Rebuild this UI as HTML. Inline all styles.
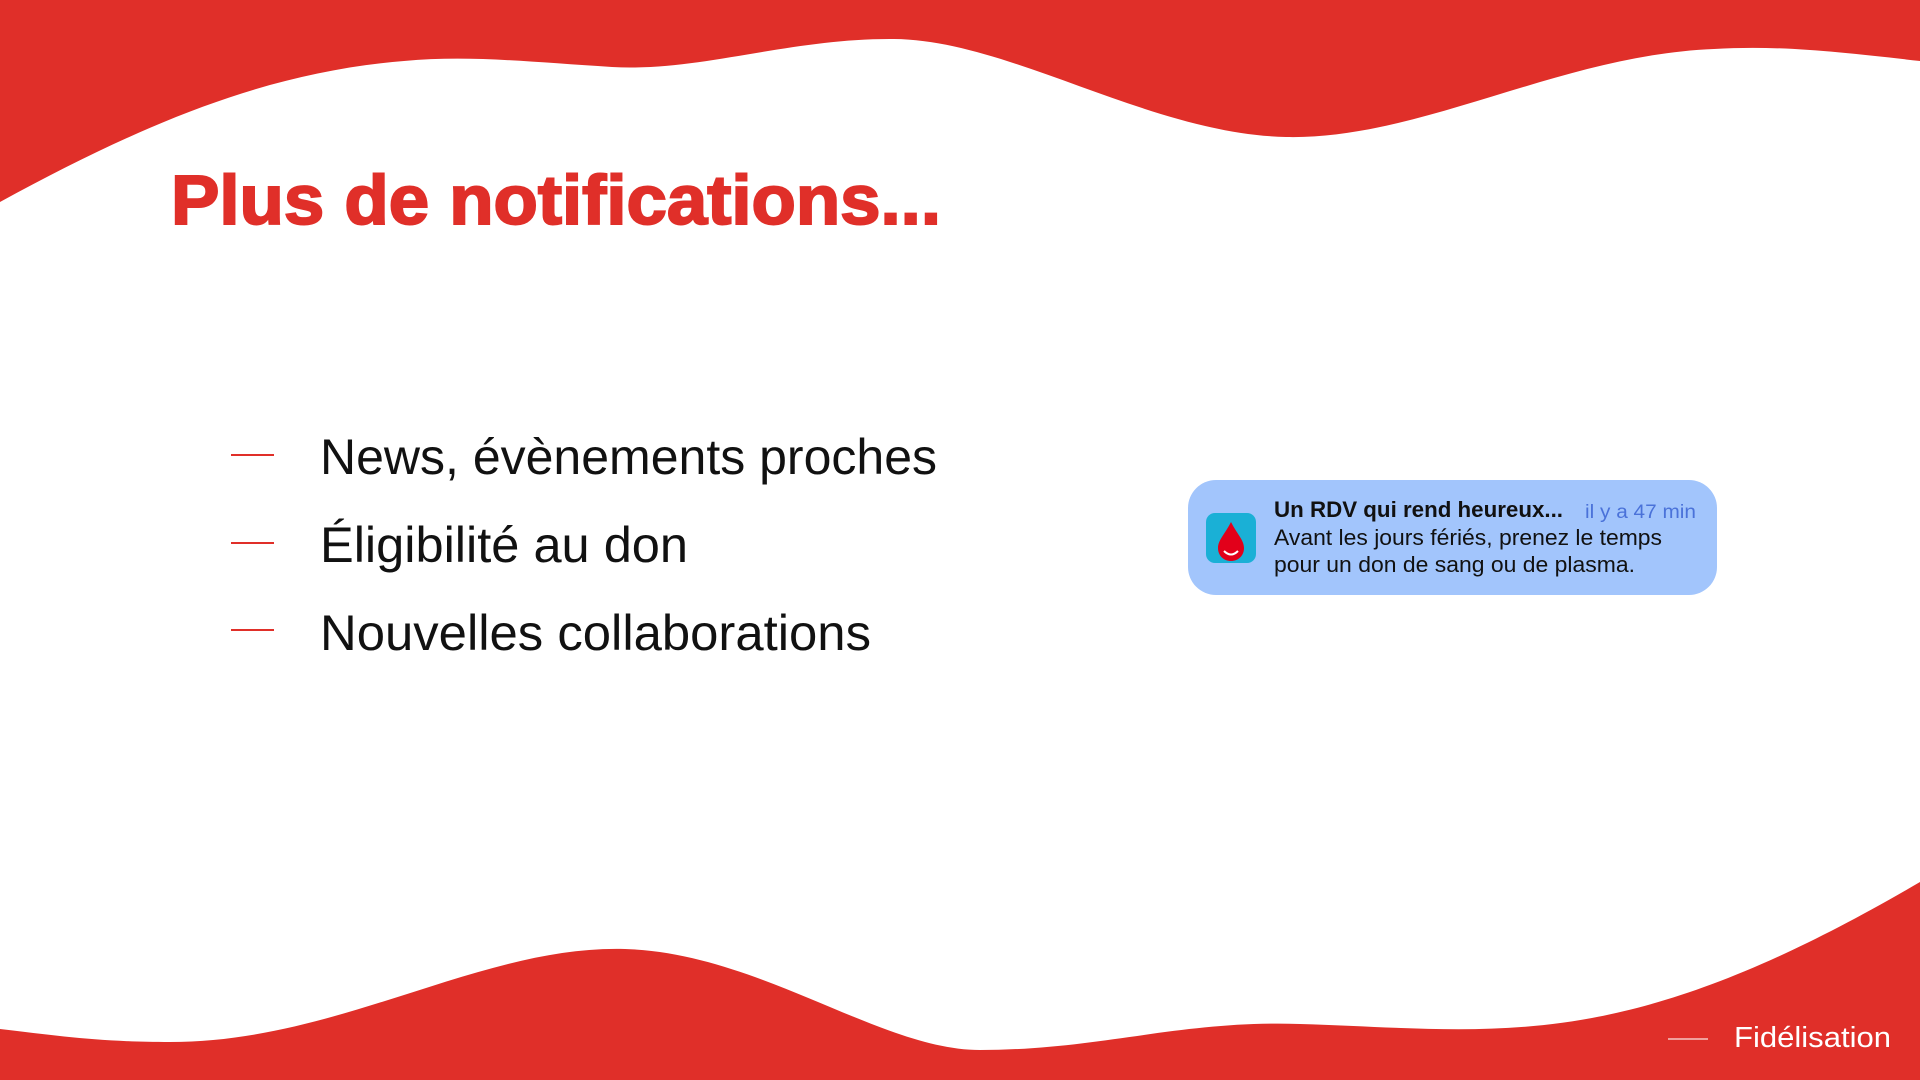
<!DOCTYPE html>
<html><head><meta charset="utf-8"><style>
html,body{margin:0;padding:0;width:1920px;height:1080px;overflow:hidden;background:#fff;font-family:"Liberation Sans",sans-serif}
</style></head><body>
<svg width="1920" height="1080" viewBox="0 0 1920 1080" xmlns="http://www.w3.org/2000/svg" style="position:absolute;left:0;top:0">
<path fill="#e02f29" d="M0,0 H1920 V61 C1840,52 1780,45 1714,49 C1560,55 1420,140 1286,137 C1150,134 1010,40 894,39 C790,38 700,72 612,67 C530,62 470,55 404,61 C270,72 150,120 0,202 Z"/>
<path fill="#e02f29" d="M0,1029 C60,1036 100,1042 170,1042 C340,1042 480,945 625,949 C760,953 880,1050 980,1050 C1100,1050 1180,1020 1300,1024 C1500,1030 1620,1058 1920,882 V1080 H0 Z"/>
<text x="171" y="224" font-family="Liberation Sans" font-weight="bold" font-size="70" fill="#e02f29" stroke="#e02f29" stroke-width="2" textLength="770" lengthAdjust="spacingAndGlyphs">Plus de notifications...</text>
<g stroke="#e02f29" stroke-width="2"><line x1="231" y1="455" x2="274" y2="455"/><line x1="231" y1="543" x2="274" y2="543"/><line x1="231" y1="630" x2="274" y2="630"/><line x1="1668" y1="1039" x2="1708" y2="1039" stroke="#f0a09c"/></g>
<g font-family="Liberation Sans" font-size="50" fill="#111">
<text x="320" y="474" textLength="617" lengthAdjust="spacingAndGlyphs">News, évènements proches</text>
<text x="320" y="562" textLength="368" lengthAdjust="spacingAndGlyphs">Éligibilité au don</text>
<text x="320" y="650" textLength="551" lengthAdjust="spacingAndGlyphs">Nouvelles collaborations</text>
</g>
<text x="1734" y="1047" font-family="Liberation Sans" font-size="29" fill="#fff" textLength="157" lengthAdjust="spacingAndGlyphs">Fidélisation</text>
<rect x="1188" y="480" width="529" height="115" rx="28" fill="#a2c5fc"/>
<rect x="1206" y="513" width="50" height="50" rx="9" fill="#1ab0d6"/>
<path d="M1231,522 C1225,534 1218,540 1218,548 C1218,556 1224,561 1231,561 C1238,561 1244,556 1244,548 C1244,540 1237,534 1231,522 Z" fill="#e2001a"/>
<path d="M1224,551 Q1231,558 1238,551" stroke="#fff" stroke-width="2" fill="none"/>
<text x="1274" y="517" font-family="Liberation Sans" font-weight="bold" font-size="22" fill="#111" textLength="289" lengthAdjust="spacingAndGlyphs">Un RDV qui rend heureux...</text>
<text x="1585" y="518" font-family="Liberation Sans" font-size="19" fill="#4a72d9" textLength="111" lengthAdjust="spacingAndGlyphs">il y a 47 min</text>
<text x="1274" y="545" font-family="Liberation Sans" font-size="22" fill="#111" textLength="388" lengthAdjust="spacingAndGlyphs">Avant les jours fériés, prenez le temps</text>
<text x="1274" y="572" font-family="Liberation Sans" font-size="22" fill="#111" textLength="361" lengthAdjust="spacingAndGlyphs">pour un don de sang ou de plasma.</text>
</svg>
</body></html>
